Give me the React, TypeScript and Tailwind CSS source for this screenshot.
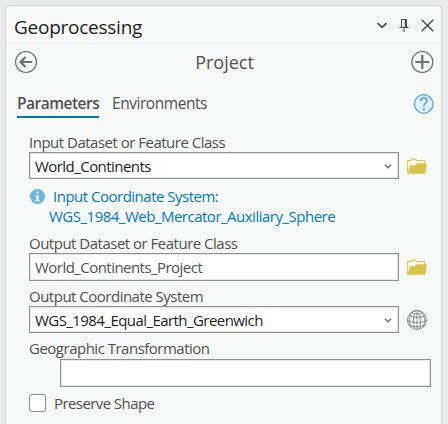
import type { ReactNode } from "react";

function Label({ children, className = "" }: { children: ReactNode; className?: string }) {
  return <div className={`h-5 leading-5 whitespace-nowrap text-[#505050] ${className}`}>{children}</div>;
}

function Field({ children, className = "" }: { children?: ReactNode; className?: string }) {
  return (
    <div
      className={`flex items-center justify-between border border-[#919191] bg-white pr-[6px] pl-[5px] leading-5 whitespace-nowrap shadow-[inset_0_0_0_1px_#e6e6e6] ${className}`}
    >
      {children}
    </div>
  );
}

function SmallChevron() {
  return (
    <svg className="mt-px h-[5px] w-2" viewBox="0 0 8 5" fill="none" stroke="#777" strokeWidth="1.5">
      <path d="M.9.7 4 3.6 7.1.7" />
    </svg>
  );
}

function Folder() {
  return (
    <svg className="h-4 w-5" viewBox="0 0 20 16">
      <path d="M.6 15.4V2.600h3.200L4.800 1.100h3.600l1.200 1.500h8v4" fill="#fbfaf0" stroke="#dcc850" strokeWidth="1.100" />
      <path d="M.5 15.700 3 7.200h4.800l2-1.900h10.100l-1.600 10.400z" fill="#d9c44a" />
    </svg>
  );
}

function Globe() {
  return (
    <svg className="size-5" viewBox="0 0 20 20" fill="none" stroke="#777" strokeWidth=".8">
      <circle cx="10" cy="10" r="9.5" />
      <ellipse cx="10" cy="2.4" rx="4.8" ry="1.5" />
      <path d="M10 2v17.4M7.600 3.700C6 8 6 14 7.600 19M12.400 3.700C14 8 14 14 12.400 19M5.200 2.400C1.500 6.500 1.800 13.500 4.300 17.300M14.800 2.400c3.700 4.100 3.400 11.100.9 14.900M2.500 5.700c4 2.200 11 2.200 15 0M.6 10.500c4.700 2.600 14.100 2.600 18.800 0M2.400 15.200c4 2.100 11.200 2.100 15.200 0" />
    </svg>
  );
}

export default function App() {
  return (
    <div className="h-[424px] w-[448px] overflow-hidden bg-[#eaeaea] pt-[5px] pl-[5px] font-['Open_Sans','Noto_Sans',sans-serif] text-[15px] tracking-[-0.5px]">
      <div className="h-[430px] w-[437px] rounded-t-[4px] border border-[#cfd0d3] bg-[#f7f9f8]">
        <header className="flex h-[38px] items-center justify-between border-b border-[#f0f1f1] pr-[7px] pl-[8px]">
          <h1 className="pt-[5px] text-[19px] leading-6 tracking-[-0.25px] text-[#1c1c1c]">Geoprocessing</h1>
          <div className="flex items-center pt-[2px] text-[#4a4a4a]">
            <svg className="mr-[12px] h-[7px] w-[10px]" viewBox="0 0 10 7" fill="none" stroke="currentColor" strokeWidth="1.7">
              <path d="M.6 1.200 5 5.300 9.400 1.200" />
            </svg>
            <svg className="mr-[12px] h-[13px] w-[10px]" viewBox="0 0 10 13" fill="none" stroke="currentColor">
              <path d="M2.500 8V.5h5V8M.5 8.500h9M5 9v4" />
              <path d="M6.500 1v7" strokeWidth="1.500" />
            </svg>
            <svg className="size-[13px]" viewBox="0 0 13 13" fill="none" stroke="currentColor" strokeWidth="1.500">
              <path d="M.7.7 12.300 12.300M12.300.7.7 12.300" />
            </svg>
          </div>
        </header>

        <div className="flex h-9 items-center justify-between pr-[7px] pl-[9px]">
          <svg className="size-[23px]" viewBox="0 0 23 23" fill="none" stroke="#6e6e6e">
            <circle cx="11" cy="11" r="10.500" strokeWidth="1.200" />
            <path d="M17.200 11H6.500M10.500 6l-5 5 5 5" strokeWidth="2.200" />
          </svg>
          <h2 className="text-[18px] leading-6 tracking-normal text-[#505050]">Project</h2>
          <svg className="size-[23px]" viewBox="0 0 23 23" fill="none" stroke="#6e6e6e">
            <circle cx="11.300" cy="11" r="10.500" strokeWidth="1.200" />
            <path d="M11.300 4v14M4.300 11h14" strokeWidth="2.200" />
          </svg>
        </div>

        <div className="flex h-[38px] items-end justify-between pr-[7px] pl-[11px]">
          <nav className="flex gap-[13px] text-[15.5px] leading-5 text-[#505050]">
            <div className="h-[25px] w-[82px] border-b-2 border-[#0079c1] font-semibold">Parameters</div>
            <div className="tracking-[-0.45px]">Environments</div>
          </nav>
          <svg className="mb-[4px] size-5" viewBox="0 0 20 20" fill="none" stroke="#56a9dd">
            <circle cx="9.700" cy="10" r="9.300" fill="#e4f1fa" strokeWidth="1.300" />
            <path d="M6.700 7.200c0-4.400 6.200-4.400 6.200-.5 0 2.500-3.100 2.700-3.100 5.800" strokeWidth="1.700" />
            <path d="M9.800 14.500v2" strokeWidth="2" />
          </svg>
        </div>

        <main className="pt-[14px] pl-[23px]">
          <Label>Input Dataset or Feature Class</Label>
          <div className="flex items-center gap-2">
            <Field className="h-[27px] w-[370px] text-[#1c1c1c]">
              <span className="tracking-[-0.55px]">World_Continents</span>
              <SmallChevron />
            </Field>
            <Folder />
          </div>

          <div className="mt-[7px] flex h-5 items-center text-[#0079c1]">
            <svg className="mr-[8px] ml-px size-[15px]" viewBox="0 0 15 15">
              <circle cx="7.500" cy="7.500" r="7.500" fill="#6cb3e3" />
              <path d="M6.500 2.500h2v2h-2zM5.500 6h3v5h1.300v1.200H5.200V11h1.300V7.200h-1z" fill="#fff" />
            </svg>
            <span className="leading-5">Input Coordinate System:</span>
          </div>
          <div className="h-5 pl-5 leading-5 text-[#0079c1]">WGS_1984_Web_Mercator_Auxiliary_Sphere</div>

          <Label className="mt-[7px]">Output Dataset or Feature Class</Label>
          <div className="flex items-center gap-2">
            <Field className="h-7 w-[370px] text-[#505050]">
              <span className="tracking-[-0.54px]">World_Continents_Project</span>
            </Field>
            <Folder />
          </div>

          <Label className="mt-[5px]">Output Coordinate System</Label>
          <div className="flex items-center gap-2">
            <Field className="h-[27px] w-[370px] text-[#1c1c1c]">
              <span className="tracking-[-0.56px]">WGS_1984_Equal_Earth_Greenwich</span>
              <SmallChevron />
            </Field>
            <Globe />
          </div>

          <Label className="mt-[5px]">Geographic Transformation</Label>
          <Field className="mt-px ml-[31px] h-7 w-[371px]" />

          <div className="mt-[6px] flex h-5 items-center gap-2">
            <div className="h-[18px] w-[17px] rounded-[3px] border border-[#8c8c8c] bg-white" />
            <span className="leading-5 tracking-[-0.58px] text-[#505050]">Preserve Shape</span>
          </div>
        </main>
      </div>
    </div>
  );
}
